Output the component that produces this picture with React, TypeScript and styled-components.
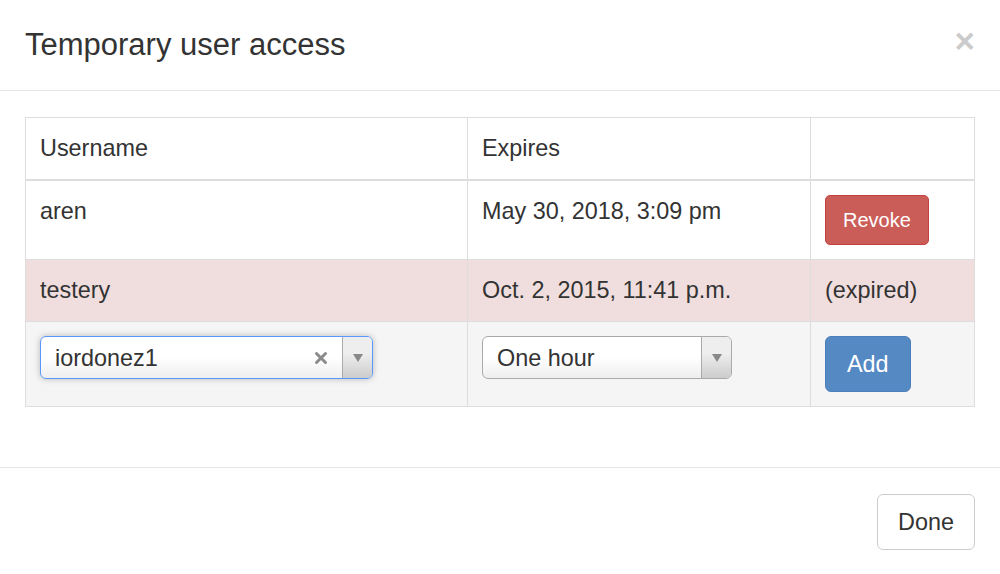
import React from 'react';
import styled, { createGlobalStyle } from 'styled-components';

const GlobalStyle = createGlobalStyle`
  html, body {
    margin: 0;
    padding: 0;
    background: #ffffff;
  }
  body {
    font-family: "Liberation Sans", Arial, Helvetica, sans-serif;
    color: #333333;
  }
`;

type Grant = {
  user: string;
  expires: string;
  expired: boolean;
};

const grants: Grant[] = [
  { user: 'aren', expires: 'May 30, 2018, 3:09 pm', expired: false },
  { user: 'testery', expires: 'Oct. 2, 2015, 11:41 p.m.', expired: true },
];

export default function App() {
  return (
    <>
      <GlobalStyle />
      <Modal>
        <Header>
          <Title>Temporary user access</Title>
          <Close aria-label="Close">×</Close>
        </Header>
        <Body>
          <Table>
            <colgroup>
              <col style={{ width: 442 }} />
              <col style={{ width: 343 }} />
              <col />
            </colgroup>
            <thead>
              <tr>
                <Th>Username</Th>
                <Th>Expires</Th>
                <Th />
              </tr>
            </thead>
            <tbody>
              {grants.map((g) => (
                <Row key={g.user} tone={g.expired ? 'danger' : 'plain'}>
                  <Td>{g.user}</Td>
                  <Td>{g.expires}</Td>
                  <Td>{g.expired ? '(expired)' : <RevokeButton>Revoke</RevokeButton>}</Td>
                </Row>
              ))}
              <Row tone="muted">
                <Td>
                  <Select focused width={333}>
                    <SelectText>iordonez1</SelectText>
                    <Clear>
                      <svg width="14" height="14" viewBox="0 0 14 14">
                        <path d="M2.5 2.5 L11.5 11.5 M11.5 2.5 L2.5 11.5" stroke="#8a8a8a" strokeWidth="3" strokeLinecap="round" />
                      </svg>
                    </Clear>
                    <Arrow>
                      <svg width="10" height="8" viewBox="0 0 10 8">
                        <path d="M0 0 L10 0 L5 8 Z" fill="#888888" />
                      </svg>
                    </Arrow>
                  </Select>
                </Td>
                <Td>
                  <Select width={250}>
                    <SelectText>One hour</SelectText>
                    <Arrow>
                      <svg width="10" height="8" viewBox="0 0 10 8">
                        <path d="M0 0 L10 0 L5 8 Z" fill="#888888" />
                      </svg>
                    </Arrow>
                  </Select>
                </Td>
                <Td>
                  <AddButton>Add</AddButton>
                </Td>
              </Row>
            </tbody>
          </Table>
        </Body>
        <Footer>
          <DoneButton>Done</DoneButton>
        </Footer>
      </Modal>
    </>
  );
}

const Modal = styled.div`
  width: 1000px;
  height: 574px;
  background: #ffffff;
  border-radius: 4px;
  overflow: hidden;
  display: flex;
  flex-direction: column;
`;

const Header = styled.div`
  display: flex;
  align-items: center;
  justify-content: space-between;
  padding: 24px 25px;
  border-bottom: 1px solid #e5e5e5;
`;

const Title = styled.h4`
  margin: 0;
  font-size: 31px;
  line-height: 42px;
  font-weight: 500;
  color: #333333;
`;

const Close = styled.button`
  border: 0;
  background: transparent;
  padding: 0;
  margin-top: -9px;
  font-family: "Liberation Sans", Arial, sans-serif;
  font-size: 35px;
  font-weight: 700;
  line-height: 1;
  color: #000000;
  opacity: 0.2;
`;

const Body = styled.div`
  padding: 26px 25px 25px;
  flex: 1;
`;

const Table = styled.table`
  width: 950px;
  border-collapse: collapse;
  border: 1px solid #dddddd;
  table-layout: fixed;
  font-size: 23.4px;
`;

const Th = styled.th`
  text-align: left;
  font-weight: 400;
  padding: 14px;
  line-height: 33px;
  border: 1px solid #dddddd;
  border-bottom-width: 2px;
  vertical-align: bottom;
`;

const rowBg: Record<string, string> = {
  plain: '#ffffff',
  danger: '#f0dede',
  muted: '#f5f5f5',
};

const Row = styled.tr<{ tone: string }>`
  background: ${(p) => rowBg[p.tone]};
`;

const Td = styled.td`
  padding: 14px;
  line-height: 33px;
  border: 1px solid #dddddd;
  vertical-align: top;
`;

const Btn = styled.button`
  display: inline-block;
  box-sizing: border-box;
  font-family: "Liberation Sans", Arial, sans-serif;
  border: 1px solid transparent;
  vertical-align: top;
  cursor: pointer;
`;

const RevokeButton = styled(Btn)`
  height: 50px;
  padding: 0 17px;
  font-size: 20px;
  border-radius: 5px;
  color: #ffffff;
  background: #cb5d58;
  border-color: #c4433e;
`;

const AddButton = styled(Btn)`
  height: 56px;
  padding: 0 21px;
  font-size: 23.4px;
  border-radius: 6px;
  color: #ffffff;
  background: #5589c4;
  border-color: #4a7fbb;
`;

const Footer = styled.div`
  display: flex;
  justify-content: flex-end;
  padding: 26px 25px 24px;
  border-top: 1px solid #e5e5e5;
`;

const DoneButton = styled(Btn)`
  height: 56px;
  padding: 0 20px;
  font-size: 23.4px;
  border-radius: 6px;
  color: #333333;
  background: #ffffff;
  border-color: #cccccc;
`;

const Select = styled.div<{ width: number; focused?: boolean }>`
  box-sizing: border-box;
  width: ${(p) => p.width}px;
  height: 43px;
  display: flex;
  align-items: stretch;
  border: 1px solid ${(p) => (p.focused ? '#5897fb' : '#aaaaaa')};
  border-radius: 6px;
  background: linear-gradient(to top, #eeeeee 0%, #ffffff 50%);
  box-shadow: ${(p) => (p.focused ? '0 0 6px rgba(0, 0, 0, 0.25)' : 'none')};
  overflow: hidden;
`;

const SelectText = styled.span`
  flex: 1;
  padding-left: 14px;
  line-height: 43px;
  font-size: 23.4px;
  color: #333333;
  white-space: nowrap;
`;

const Clear = styled.span`
  display: flex;
  align-items: center;
  justify-content: center;
  width: 30px;
  margin-right: 6px;
`;

const Arrow = styled.span`
  width: 29px;
  display: flex;
  align-items: center;
  justify-content: center;
  border-left: 1px solid #aaaaaa;
  background: linear-gradient(to top, #cccccc 0%, #eeeeee 60%);
`;
